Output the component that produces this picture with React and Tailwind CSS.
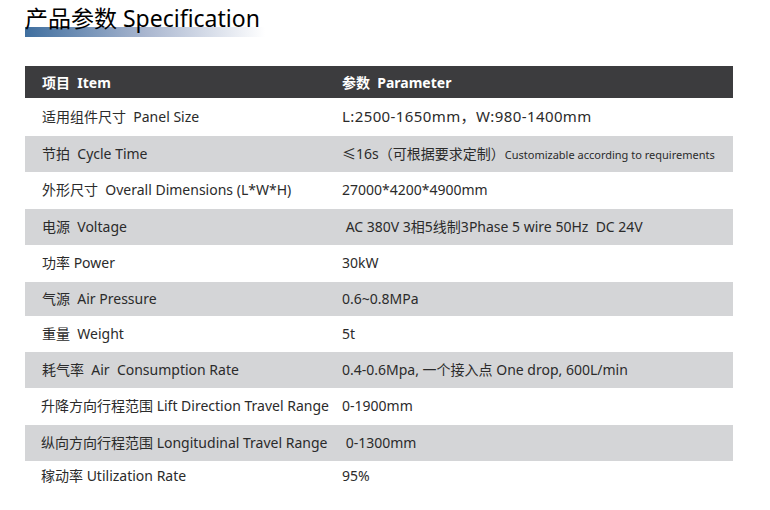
const rows = [
  { h: "h-[38px]", item: "适用组件尺寸  Panel Size", value: "L:2500-1650mm，W:980-1400mm", vc: "text-[15px] tracking-[0.4px]" },
  {
    h: "h-[36px]",
    item: "节拍  Cycle Time",
    value: (
      <>
        ≤16s（可根据要求定制）
        <span className="text-[11px]">Customizable according to requirements</span>
      </>
    ),
  },
  { h: "h-[37px]", item: "外形尺寸  Overall Dimensions (L*W*H)", value: "27000*4200*4900mm" },
  { h: "h-[36px]", item: "电源  Voltage", value: " AC 380V 3相5线制3Phase 5 wire 50Hz  DC 24V" },
  { h: "h-[37px]", item: "功率 Power", value: "30kW" },
  { h: "h-[34px]", item: "气源  Air Pressure", value: "0.6~0.8MPa" },
  { h: "h-[36px]", item: "重量  Weight", value: "5t" },
  { h: "h-[36px]", item: "耗气率  Air  Consumption Rate", value: "0.4-0.6Mpa, 一个接入点 One drop, 600L/min" },
  { h: "h-[37px]", item: "升降方向行程范围 Lift Direction Travel Range", value: "0-1900mm" },
  { h: "h-[36px]", item: "纵向方向行程范围 Longitudinal Travel Range", value: " 0-1300mm" },
  { h: "h-[30px]", item: "稼动率 Utilization Rate", value: "95%" },
];

export default function App() {
  return (
    <div
      className="h-[510px] w-[770px] bg-white text-[#2b2b2b]"
      style={{ fontFamily: '"Noto Sans", "Noto Sans CJK SC", sans-serif' }}
    >
      {/* Title */}
      <div className="relative ml-[25px] pt-[4px]">
        <div className="absolute left-0 top-[27px] h-[10px] w-[240px] bg-gradient-to-r from-[#3f6f9f] via-[#a9b6cf] to-white" />
        <h1 className="relative whitespace-pre text-[23px] leading-[29px] text-black">
          产品参数 Specification
        </h1>
      </div>

      {/* Table */}
      <div className="ml-[25px] mt-[33px] w-[708px]">
        <div className="flex h-[32px] items-center bg-[#3c3c3e] text-[14px] font-bold text-white">
          <div className="w-[317px] whitespace-pre pl-[17px]">项目  Item</div>
          <div className="whitespace-pre">参数  Parameter</div>
        </div>
        {rows.map((r, i) => (
          <div
            key={i}
            className={`flex ${r.h} items-center pb-[2px] text-[14px] ${
              i % 2 === 1 ? "bg-[#d4d5d7]" : "bg-white"
            }`}
          >
            <div className={`w-[317px] whitespace-pre ${i >= 8 ? "pl-[16px]" : "pl-[17px]"}`}>{r.item}</div>
            <div className={`whitespace-pre ${r.vc || ""}`}>{r.value}</div>
          </div>
        ))}
      </div>
    </div>
  );
}
